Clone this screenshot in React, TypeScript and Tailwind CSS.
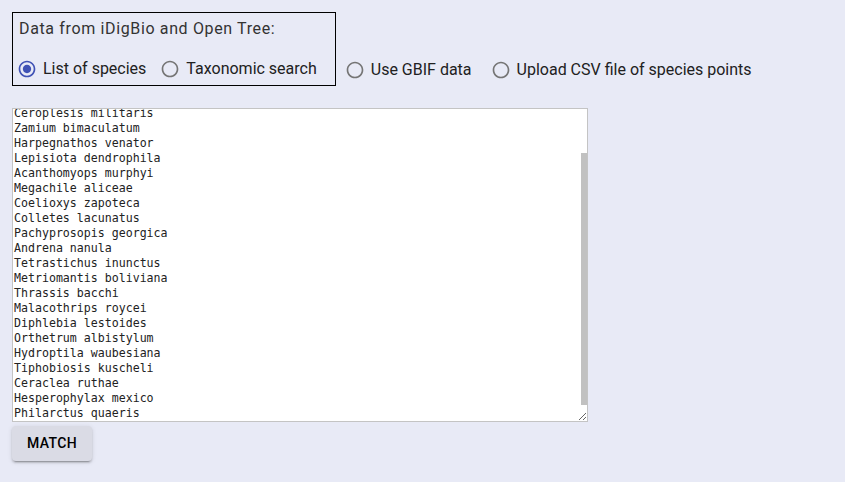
import { useEffect, useRef, useState } from 'react';

const species = [
  'Camponotus pennsylvanicus',
  'Bombus impatiens',
  'Ceroplesis militaris',
  'Zamium bimaculatum',
  'Harpegnathos venator',
  'Lepisiota dendrophila',
  'Acanthomyops murphyi',
  'Megachile aliceae',
  'Coelioxys zapoteca',
  'Colletes lacunatus',
  'Pachyprosopis georgica',
  'Andrena nanula',
  'Tetrastichus inunctus',
  'Metriomantis boliviana',
  'Thrassis bacchi',
  'Malacothrips roycei',
  'Diphlebia lestoides',
  'Orthetrum albistylum',
  'Hydroptila waubesiana',
  'Tiphobiosis kuscheli',
  'Ceraclea ruthae',
  'Hesperophylax mexico',
  'Philarctus quaeris',
];

const RadioIcon = ({ checked }: { checked: boolean }) => (
  <svg viewBox="0 0 24 24" className={checked ? 'w-5 h-5 text-[#3f51b5]' : 'w-5 h-5 text-[#757575]'} fill="currentColor">
    <path d="M12 2C6.48 2 2 6.48 2 12s4.48 10 10 10 10-4.48 10-10S17.52 2 12 2zm0 18c-4.42 0-8-3.58-8-8s3.58-8 8-8 8 3.58 8 8-3.58 8-8 8z" />
    {checked && <path d="M12 7c-2.76 0-5 2.24-5 5s2.24 5 5 5 5-2.24 5-5-2.24-5-5-5z" />}
  </svg>
);

const Radio = ({ label, checked, onClick }: { label: string; checked: boolean; onClick: () => void }) => (
  <label className="flex items-center gap-[6px] cursor-pointer" onClick={onClick}>
    <RadioIcon checked={checked} />
    <span className="text-[16px] text-[#212121]">{label}</span>
  </label>
);

const App = () => {
  const [source, setSource] = useState('list');
  const areaRef = useRef<HTMLTextAreaElement>(null);

  useEffect(() => {
    if (areaRef.current) areaRef.current.scrollTop = areaRef.current.scrollHeight;
  }, []);

  return (
    <div className="min-h-screen bg-[#e8eaf6] p-3 font-['Roboto',sans-serif]">
      <div className="flex items-end">
        {/* iDigBio / Open Tree group */}
        <div className="border border-black pl-[4px] pr-[18px] pt-[7px] pb-[6px]">
          <div className="text-[16px] tracking-[0.04em] text-[#333] pl-[2px] leading-[18px]">Data from iDigBio and Open Tree:</div>
          <div className="flex items-center gap-[14px] mt-[21px] h-[20px]">
            <Radio label="List of species" checked={source === 'list'} onClick={() => setSource('list')} />
            <Radio label="Taxonomic search" checked={source === 'taxon'} onClick={() => setSource('taxon')} />
          </div>
        </div>
        <div className="flex items-center gap-[19px] pl-[9px] pb-[6px] h-[20px] box-content">
          <Radio label="Use GBIF data" checked={source === 'gbif'} onClick={() => setSource('gbif')} />
          <Radio label="Upload CSV file of species points" checked={source === 'csv'} onClick={() => setSource('csv')} />
        </div>
      </div>

      <div className="relative mt-[22px] w-[576px]">
        <textarea
          ref={areaRef}
          defaultValue={species.join('\n')}
          spellCheck={false}
          className="block w-[576px] h-[314px] bg-white border border-[#c4c4c4] px-[1px] pt-[2px] pb-0 font-['DejaVu_Sans_Mono',monospace] text-[11.6px] leading-[15px] text-[#222] outline-none [scrollbar-width:none]"
        />
        {/* scrollbar thumb */}
        <div className="absolute right-[1px] top-[45px] w-[6px] h-[252px] bg-[#c1c1c1] pointer-events-none" />
      </div>

      <button className="mt-[4px] w-[80px] h-[35px] rounded-[4px] bg-[#dadbe5] shadow-[0_3px_1px_-2px_rgba(0,0,0,0.2),0_2px_2px_0_rgba(0,0,0,0.14),0_1px_5px_0_rgba(0,0,0,0.12)] text-[14px] font-medium tracking-[0.02857em] text-black">
        MATCH
      </button>
    </div>
  );
};

export default App;
